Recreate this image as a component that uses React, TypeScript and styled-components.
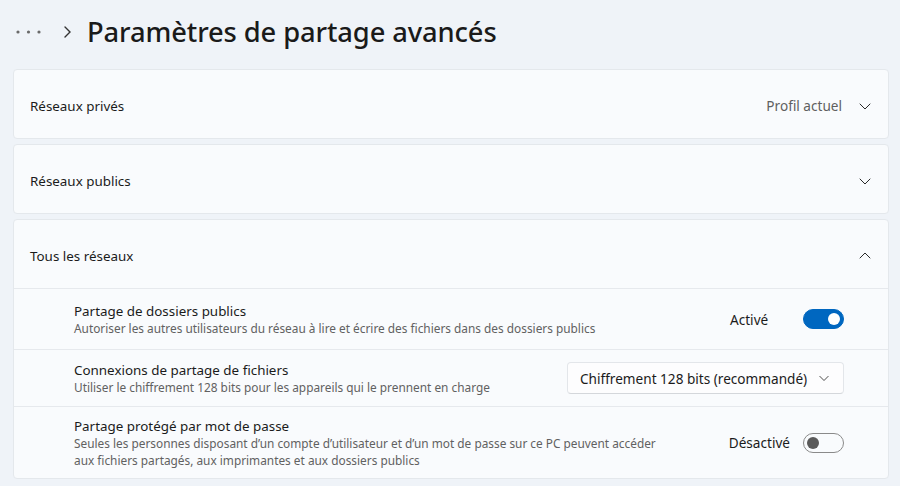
import styled, { createGlobalStyle } from 'styled-components';

const GlobalStyle = createGlobalStyle`
  body {
    margin: 0;
    background: #eff3f8;
    font-family: "Segoe UI", "Noto Sans", sans-serif;
    color: #1b1b1b;
  }
`;

const Page = styled.div`
  width: 900px;
  height: 486px;
  overflow: hidden;
  display: flex;
  flex-direction: column;
`;

const Header = styled.div`
  height: 69px;
  display: flex;
  align-items: center;
  padding-left: 15px;
  box-sizing: border-box;
  padding-bottom: 6px;
`;

const Crumb = styled.div`
  display: flex;
  align-items: center;
  color: #5d5d5d;
`;

const Title = styled.h1`
  margin: 0 0 0 8px;
  font-size: 27.3px;
  font-weight: 500;
  letter-spacing: -0.1px;
  color: #1a1a1a;
`;

const Cards = styled.div`
  display: flex;
  flex-direction: column;
  gap: 5px;
  padding: 0 11px 0 13px;
`;

const Card = styled.div`
  background: #f9fbfd;
  border: 1px solid #e4e8ec;
  border-radius: 4px;
  display: flex;
  flex-direction: column;
`;

const CardHead = styled.div`
  height: 68px;
  box-sizing: border-box;
  padding: 3px 17px 0 16px;
  display: flex;
  align-items: center;
  font-size: 13.4px;
`;

const HeadLabel = styled.span`
  flex: 1;
`;

const HeadValue = styled.span`
  color: #5f5f5f;
  margin-right: 17px;
  font-size: 13.6px;
`;

const Row = styled.div<{ h: number }>`
  height: ${(p) => p.h}px;
  border-top: 1px solid #e6e9ed;
  display: flex;
  align-items: center;
  padding: 0 44px 0 60px;
`;

const RowText = styled.div`
  flex: 1;
  display: flex;
  flex-direction: column;
`;

const RowTitle = styled.div`
  font-size: 13.4px;
  line-height: 18px;
  color: #1b1b1b;
`;

const RowSub = styled.div`
  font-size: 11.85px;
  line-height: 17px;
  color: #616161;
  max-width: 600px;
`;

const StateLabel = styled.span`
  font-size: 13.6px;
  margin-right: 13px;
  min-width: 60px;
`;

const Toggle = styled.div<{ on: boolean }>`
  width: 41px;
  height: 20px;
  box-sizing: border-box;
  border-radius: 10px;
  background: ${(p) => (p.on ? '#0067c0' : 'transparent')};
  border: 1px solid ${(p) => (p.on ? '#0067c0' : '#8a8a8a')};
  display: flex;
  align-items: center;
  justify-content: ${(p) => (p.on ? 'flex-end' : 'flex-start')};
  padding: 0 3px;
  &::after {
    content: '';
    width: 12px;
    height: 12px;
    border-radius: 50%;
    background: ${(p) => (p.on ? '#ffffff' : '#5a5a5a')};
  }
`;

const Select = styled.div`
  width: 277px;
  height: 32px;
  box-sizing: border-box;
  border: 1px solid #e3e6ea;
  border-bottom-color: #d4d7db;
  border-radius: 4px;
  background: #fdfdfe;
  display: flex;
  align-items: center;
  padding: 0 14px 0 12px;
  font-size: 13.6px;
  justify-content: space-between;
`;

function Chevron({ dir, size = 12 }: { dir: 'up' | 'down'; size?: number }) {
  const d = dir === 'down' ? 'M1 4 L6 9 L11 4' : 'M1 8 L6 3 L11 8';
  return (
    <svg width={size} height={size} viewBox="0 0 12 12">
      <path d={d} fill="none" stroke="#2a2a2a" strokeWidth="1" strokeLinecap="round" strokeLinejoin="round" />
    </svg>
  );
}

export default function App() {
  return (
    <Page>
      <GlobalStyle />
      <Header>
        <Crumb>
          <svg width="30" height="6" viewBox="0 0 30 6">
            <circle cx="3" cy="3" r="1.6" fill="#6a6a6a" />
            <circle cx="13.5" cy="3" r="1.6" fill="#6a6a6a" />
            <circle cx="24" cy="3" r="1.6" fill="#6a6a6a" />
          </svg>
          <svg width="16" height="12" viewBox="0 0 16 12" style={{ marginLeft: 18 }}>
            <path d="M2 1 L7 6 L2 11" fill="none" stroke="#333" strokeWidth="1.4" strokeLinecap="round" />
          </svg>
        </Crumb>
        <Title>Paramètres de partage avancés</Title>
      </Header>
      <Cards>
        <Card>
          <CardHead>
            <HeadLabel>Réseaux privés</HeadLabel>
            <HeadValue>Profil actuel</HeadValue>
            <Chevron dir="down" />
          </CardHead>
        </Card>
        <Card>
          <CardHead>
            <HeadLabel>Réseaux publics</HeadLabel>
            <Chevron dir="down" />
          </CardHead>
        </Card>
        <Card>
          <CardHead>
            <HeadLabel>Tous les réseaux</HeadLabel>
            <Chevron dir="up" />
          </CardHead>
          <Row h={60}>
            <RowText>
              <RowTitle>Partage de dossiers publics</RowTitle>
              <RowSub>Autoriser les autres utilisateurs du réseau à lire et écrire des fichiers dans des dossiers publics</RowSub>
            </RowText>
            <StateLabel>Activé</StateLabel>
            <Toggle on />
          </Row>
          <Row h={56}>
            <RowText>
              <RowTitle>Connexions de partage de fichiers</RowTitle>
              <RowSub>Utiliser le chiffrement 128 bits pour les appareils qui le prennent en charge</RowSub>
            </RowText>
            <Select>
              <span>Chiffrement 128 bits (recommandé)</span>
              <Chevron dir="down" size={10} />
            </Select>
          </Row>
          <Row h={71}>
            <RowText>
              <RowTitle>Partage protégé par mot de passe</RowTitle>
              <RowSub>
                Seules les personnes disposant d’un compte d’utilisateur et d’un mot de passe sur ce PC peuvent accéder
                aux fichiers partagés, aux imprimantes et aux dossiers publics
              </RowSub>
            </RowText>
            <StateLabel>Désactivé</StateLabel>
            <Toggle on={false} />
          </Row>
        </Card>
      </Cards>
    </Page>
  );
}
